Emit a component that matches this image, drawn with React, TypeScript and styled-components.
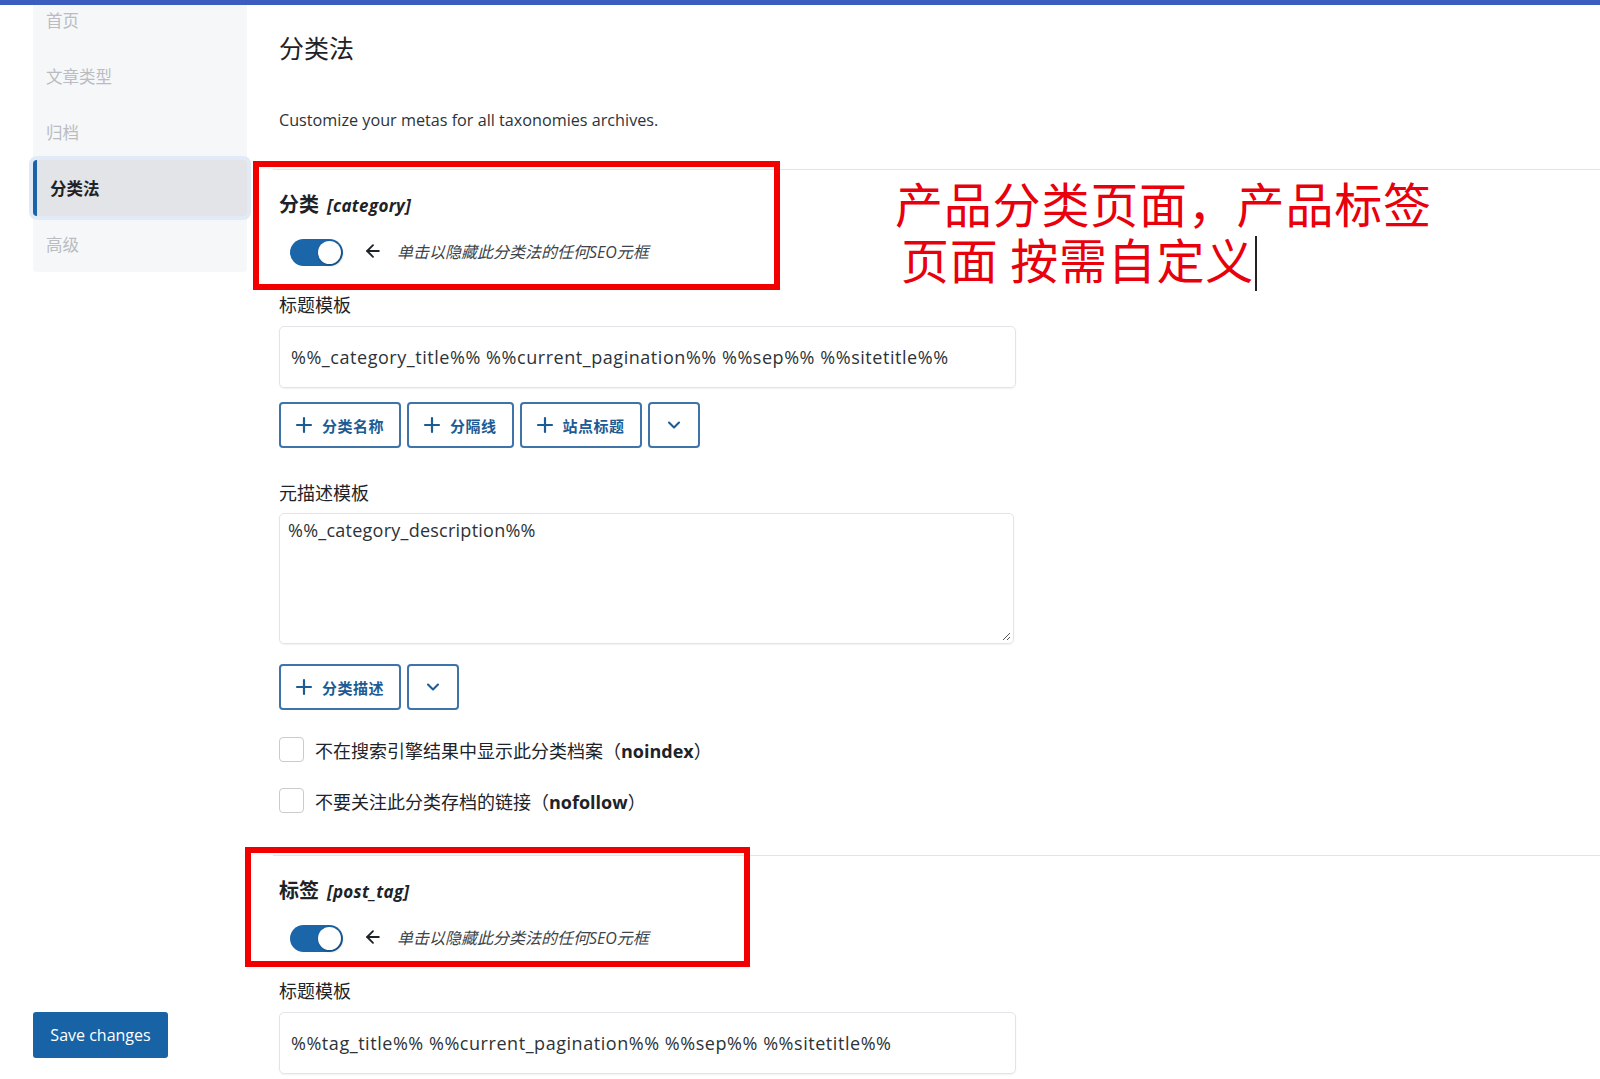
import styled, { createGlobalStyle } from 'styled-components';
import { ArrowLeft, ChevronDown, Plus } from 'lucide-react';

const GlobalStyle = createGlobalStyle`
  body {
    margin: 0;
    background: #fff;
    font-family: "Open Sans", "Noto Sans CJK SC", sans-serif;
    color: #1d2327;
  }
`;

// page frame
const Page = styled.div`
  position: relative;
  height: 1079px;
  overflow: hidden;
`;
const TopBar = styled.div`
  height: 5px;
  background: #3b5dbd;
`;
const Layout = styled.div`
  display: flex;
  height: 1074px;
  overflow: hidden;
`;

// sidebar
const Sidebar = styled.aside`
  width: 214px;
  margin-left: 33px;
  flex-shrink: 0;
  display: flex;
  flex-direction: column;
`;
const Nav = styled.nav`
  margin-top: -13px;
  background: #f6f7f9;
  border-radius: 0 0 4px 4px;
`;
const NavItem = styled.div<{ $active?: boolean }>`
  position: relative;
  display: flex;
  align-items: center;
  height: 56px;
  padding-left: 13px;
  font-size: 16.5px;
  color: ${(p) => (p.$active ? '#1d2327' : '#b9bcc1')};
  font-weight: ${(p) => (p.$active ? 700 : 400)};
  background: ${(p) => (p.$active ? '#e3e4e8' : 'transparent')};
  border-left: ${(p) => (p.$active ? '4px solid #1b64a8' : 'none')};
  border-radius: ${(p) => (p.$active ? '4px' : '0')};
  box-shadow: ${(p) => (p.$active ? '0 0 0 4px #e2e9f7' : 'none')};
  z-index: ${(p) => (p.$active ? 1 : 0)};
`;
const SaveButton = styled.button`
  margin-top: auto;
  margin-bottom: 21px;
  width: 135px;
  height: 46px;
  border: none;
  border-radius: 3px;
  background: #1763a6;
  color: #fff;
  font-family: "Open Sans", sans-serif;
  font-size: 16px;
  cursor: pointer;
`;

// main column
const Main = styled.main`
  flex: 1;
  padding-left: 26px;
`;
const Header = styled.div`
  padding-left: 6px;
`;
const Title = styled.h1`
  margin: 26px 0 0;
  font-size: 25px;
  line-height: 34px;
  font-weight: 400;
`;
const Description = styled.p`
  margin: 43px 0 37px;
  font-size: 16.2px;
  line-height: 24px;
  color: #2c3338;
`;
const Section = styled.section`
  border-top: 1px solid #e4e4e4;
  padding: 22px 0 42px 6px;
`;
const SectionTitle = styled.h2`
  margin: 0;
  font-size: 20px;
  line-height: 26px;
  font-weight: 700;
  em {
    font-size: 17px;
    letter-spacing: 0.3px;
    margin-left: 8px;
  }
`;
const ToggleRow = styled.div`
  display: flex;
  align-items: center;
  margin-top: 20px;
  margin-bottom: 1px;
  padding-left: 11px;
  height: 27px;
  color: #3c434a;
  svg {
    margin-left: 20px;
    margin-right: 14px;
    margin-bottom: 3px;
  }
`;
const Toggle = styled.span`
  position: relative;
  width: 53px;
  height: 27px;
  border-radius: 14px;
  background: #1b65a9;
  &::after {
    content: '';
    position: absolute;
    right: 2px;
    top: 2px;
    width: 23px;
    height: 23px;
    border-radius: 50%;
    background: #fff;
    box-shadow: 1px 1px 3px rgba(0, 0, 0, 0.35);
  }
`;
const Hint = styled.span`
  font-style: italic;
  font-size: 16px;
  margin-bottom: 4px;
`;
const Label = styled.div<{ $gap: number }>`
  margin-top: ${(p) => p.$gap}px;
  font-size: 18px;
  line-height: 24px;
  color: #1d2327;
`;
const TextInput = styled.div`
  margin-top: 9px;
  width: 737px;
  height: 62px;
  box-sizing: border-box;
  display: flex;
  align-items: center;
  padding: 0 11px;
  border: 1px solid #e2e4e7;
  border-radius: 5px;
  box-shadow: 0 1px 2px rgba(0, 0, 0, 0.06);
  font-size: 18px;
  letter-spacing: 0.55px;
  color: #2c3338;
`;
const TextArea = styled.div`
  position: relative;
  margin-top: 8px;
  width: 735px;
  height: 131px;
  box-sizing: border-box;
  padding: 3px 8px;
  border: 1px solid #e2e4e7;
  border-radius: 5px;
  box-shadow: 0 1px 2px rgba(0, 0, 0, 0.06);
  font-size: 18px;
  letter-spacing: 0.25px;
  line-height: 26px;
  color: #2c3338;
  svg {
    position: absolute;
    right: 2px;
    bottom: 2px;
  }
`;
const ButtonRow = styled.div<{ $gap: number }>`
  display: flex;
  gap: 6px;
  margin-top: ${(p) => p.$gap}px;
`;
const VarButton = styled.button<{ $icon?: boolean }>`
  display: flex;
  align-items: center;
  justify-content: center;
  gap: 6px;
  height: 46px;
  box-sizing: border-box;
  padding: ${(p) => (p.$icon ? '0' : '0 15px 0 11px')};
  width: ${(p) => (p.$icon ? '52px' : 'auto')};
  border: 2px solid #3e74a8;
  border-radius: 4px;
  background: #fff;
  color: #1d5b94;
  font-family: "Open Sans", "Noto Sans CJK SC", sans-serif;
  font-size: 15px;
  letter-spacing: 0.5px;
  font-weight: 600;
`;
const CheckRow = styled.label<{ $gap: number }>`
  display: flex;
  align-items: center;
  gap: 11px;
  margin-top: ${(p) => p.$gap}px;
  height: 25px;
  font-size: 18px;
  color: #1d2327;
  b {
    font-weight: 700;
  }
`;
const CheckBox = styled.span`
  width: 25px;
  height: 25px;
  box-sizing: border-box;
  border: 1px solid #c9cbcf;
  border-radius: 4px;
  background: #fff;
`;

// annotations drawn over the screenshot
const RedBox = styled.div<{ $x: number; $y: number; $w: number; $h: number }>`
  position: absolute;
  left: ${(p) => p.$x}px;
  top: ${(p) => p.$y}px;
  width: ${(p) => p.$w}px;
  height: ${(p) => p.$h}px;
  box-sizing: border-box;
  border: 6px solid #f20000;
  pointer-events: none;
`;
const Note = styled.div`
  position: absolute;
  left: 895px;
  top: 174px;
  font-family: "Noto Sans CJK SC", sans-serif;
  font-size: 48px;
  line-height: 56px;
  font-weight: 400;
  letter-spacing: 0.8px;
  color: #e8000d;
  div + div {
    padding-left: 6px;
  }
`;
const Caret = styled.span`
  display: inline-block;
  width: 2px;
  height: 55px;
  margin-left: 1px;
  vertical-align: -12px;
  background: #222;
`;

function TaxonomyFields({ name, slug, titleText, descText }: {
  name: string;
  slug: string;
  titleText: string;
  descText: string;
}) {
  return (
    <Section>
      <SectionTitle>
        {name}
        <em>[{slug}]</em>
      </SectionTitle>
      <ToggleRow>
        <Toggle />
        <ArrowLeft size={20} strokeWidth={2.2} color="#1d2327" />
        <Hint>单击以隐藏此分类法的任何SEO元框</Hint>
      </ToggleRow>
      <Label $gap={27}>标题模板</Label>
      <TextInput>{titleText}</TextInput>
      <ButtonRow $gap={14}>
        <VarButton><Plus size={24} strokeWidth={2.2} />分类名称</VarButton>
        <VarButton><Plus size={24} strokeWidth={2.2} />分隔线</VarButton>
        <VarButton><Plus size={24} strokeWidth={2.2} />站点标题</VarButton>
        <VarButton $icon><ChevronDown size={20} strokeWidth={2.5} /></VarButton>
      </ButtonRow>
      <Label $gap={33}>元描述模板</Label>
      <TextArea>
        {descText}
        <svg width="10" height="10" viewBox="0 0 10 10">
          <path d="M9 2 L2 9 M9 6 L6 9" stroke="#555" strokeWidth="1" />
        </svg>
      </TextArea>
      <ButtonRow $gap={20}>
        <VarButton><Plus size={24} strokeWidth={2.2} />分类描述</VarButton>
        <VarButton $icon><ChevronDown size={20} strokeWidth={2.5} /></VarButton>
      </ButtonRow>
      <CheckRow $gap={27}>
        <CheckBox />
        <span>不在搜索引擎结果中显示此分类档案（<b>noindex</b>）</span>
      </CheckRow>
      <CheckRow $gap={26}>
        <CheckBox />
        <span>不要关注此分类存档的链接（<b>nofollow</b>）</span>
      </CheckRow>
    </Section>
  );
}

export default function App() {
  return (
    <Page>
      <GlobalStyle />
      <TopBar />
      <Layout>
        <Sidebar>
          <Nav>
            <NavItem>首页</NavItem>
            <NavItem>文章类型</NavItem>
            <NavItem>归档</NavItem>
            <NavItem $active>分类法</NavItem>
            <NavItem>高级</NavItem>
          </Nav>
          <SaveButton>Save changes</SaveButton>
        </Sidebar>
        <Main>
          <Header>
            <Title>分类法</Title>
            <Description>Customize your metas for all taxonomies archives.</Description>
          </Header>
          <TaxonomyFields
            name="分类"
            slug="category"
            titleText="%%_category_title%% %%current_pagination%% %%sep%% %%sitetitle%%"
            descText="%%_category_description%%"
          />
          <TaxonomyFields
            name="标签"
            slug="post_tag"
            titleText="%%tag_title%% %%current_pagination%% %%sep%% %%sitetitle%%"
            descText="%%tag_description%%"
          />
        </Main>
      </Layout>
      <RedBox $x={253} $y={161} $w={527} $h={129} />
      <RedBox $x={245} $y={847} $w={505} $h={120} />
      <Note>
        <div>产品分类页面，产品标签</div>
        <div>页面 按需自定义<Caret /></div>
      </Note>
    </Page>
  );
}
